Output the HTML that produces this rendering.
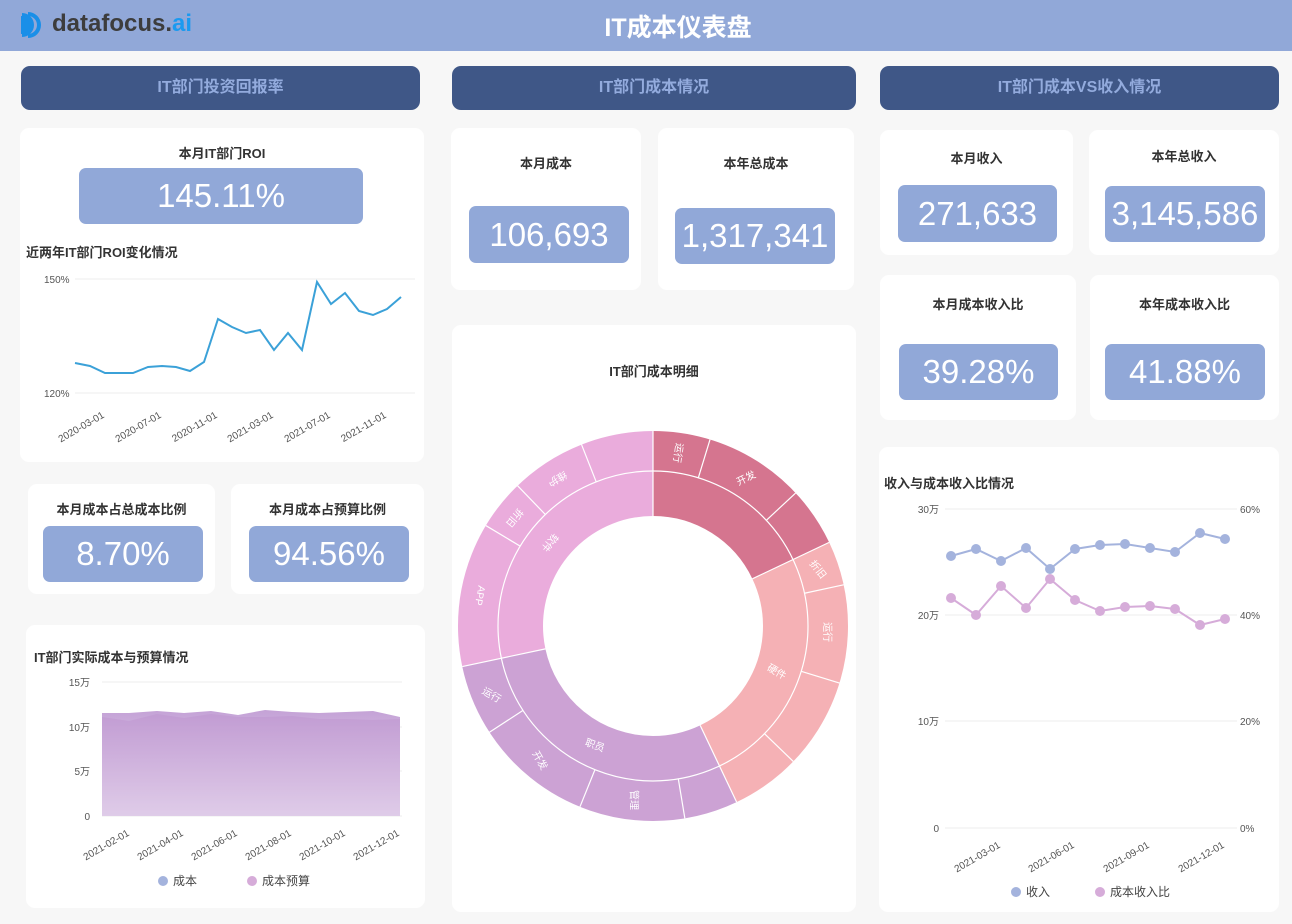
<!DOCTYPE html>
<html><head><meta charset="utf-8"><style>
*{margin:0;padding:0;box-sizing:border-box}
body{width:1292px;height:924px;background:#f7f7f7;font-family:"Liberation Sans","Noto Sans CJK SC",sans-serif;position:relative;overflow:hidden}
.a{position:absolute}
.hdr{left:0;top:0;width:1292px;height:51px;background:#91a8d8}
.sec{background:#3f5787;border-radius:9px;color:#93abdd;font-weight:bold;font-size:16px;text-align:center;line-height:44px;height:44px}
.card{background:#fff;border-radius:9px}
.t{font-size:13px;font-weight:bold;color:#333;text-align:center;position:absolute;width:100%}
.box{background:#91a8d8;border-radius:7px;color:#fff;font-size:33px;text-align:center;position:absolute}
.ax{font-size:10px;fill:#555;font-family:"Liberation Sans",sans-serif}
</style></head><body>
<div class="a hdr"></div>
<svg class="a" style="left:20px;top:10px" width="30" height="30" viewBox="0 0 30 30"><path d="M2 3 A12 12 0 0 1 2 27 Z" fill="#1a8fe8" transform="translate(0,0)"/><path d="M8 2 A13 13 0 0 1 8 28 L8 24 A9 9 0 0 0 8 6 Z" fill="#1a8fe8"/><path d="M1 6 A8 9 0 0 1 1 24 Z" fill="#1a8fe8"/></svg>
<div class="a" style="left:52px;top:10px;font-size:24px;font-weight:bold;color:#3d3d3d;letter-spacing:0px">datafocus.<span style="color:#1a9af0">ai</span></div>
<div class="a" style="left:0;width:1356px;top:8px;text-align:center;color:#fff;font-size:25px;font-weight:bold">IT成本仪表盘</div>

<div class="a sec" style="left:21px;top:66px;width:399px">IT部门投资回报率</div>
<div class="a sec" style="left:452px;top:66px;width:404px">IT部门成本情况</div>
<div class="a sec" style="left:880px;top:66px;width:399px">IT部门成本VS收入情况</div>

<!-- col1 -->
<div class="a card" style="left:20px;top:128px;width:404px;height:334px">
<div class="t" style="top:15px">本月IT部门ROI</div>
<div class="box" style="left:59px;top:40px;width:284px;height:56px;line-height:56px">145.11%</div>
<div class="a" style="left:6px;top:114px;font-size:13px;font-weight:bold;color:#333">近两年IT部门ROI变化情况</div>
</div>
<svg class="a" style="left:20px;top:260px" width="404" height="200">
<line x1="55" y1="19" x2="395" y2="19" stroke="#eee"/><line x1="55" y1="133" x2="395" y2="133" stroke="#eee"/>
<text class="ax" x="24" y="23">150%</text><text class="ax" x="24" y="137">120%</text>
<polyline fill="none" stroke="#3ba1d8" stroke-width="2" points="55,103 70,106 85,113 100,113 113,113 128,107 142,106 156,107 170,111 184,102 198,59 212,67 226,73 240,70 254,90 268,73 282,90 297,22 311,44 325,33 339,51 353,55 367,49 381,37"/>
<g class="ax" text-anchor="end"><text transform="translate(85,157) rotate(-30)">2020-03-01</text><text transform="translate(142,157) rotate(-30)">2020-07-01</text><text transform="translate(198,157) rotate(-30)">2020-11-01</text><text transform="translate(254,157) rotate(-30)">2021-03-01</text><text transform="translate(311,157) rotate(-30)">2021-07-01</text><text transform="translate(367,157) rotate(-30)">2021-11-01</text></g>
</svg>

<div class="a card" style="left:28px;top:484px;width:187px;height:110px"><div class="t" style="top:15px">本月成本占总成本比例</div><div class="box" style="left:15px;top:42px;width:160px;height:56px;line-height:56px">8.70%</div></div>
<div class="a card" style="left:231px;top:484px;width:193px;height:110px"><div class="t" style="top:15px">本月成本占预算比例</div><div class="box" style="left:18px;top:42px;width:160px;height:56px;line-height:56px">94.56%</div></div>

<div class="a card" style="left:26px;top:625px;width:399px;height:283px"><div class="a" style="left:8px;top:22px;font-size:13px;font-weight:bold;color:#333">IT部门实际成本与预算情况</div></div>
<svg class="a" style="left:26px;top:625px" width="399" height="283">
<defs><linearGradient id="g" x1="0" y1="0" x2="0" y2="1"><stop offset="0" stop-color="#c4a2d6"/><stop offset="1" stop-color="#f3eef8"/></linearGradient></defs>
<g stroke="#eee"><line x1="76" y1="57" x2="376" y2="57"/><line x1="76" y1="102" x2="376" y2="102"/><line x1="76" y1="146" x2="376" y2="146"/><line x1="76" y1="191" x2="376" y2="191"/></g>
<g class="ax" text-anchor="end"><text x="64" y="61">15万</text><text x="64" y="106">10万</text><text x="64" y="150">5万</text><text x="64" y="195">0</text></g>
<polygon fill="url(#g)" points="76,88 103,88 131,86 158,88 185,86 212,90 239,85 266,87 293,88 320,87 347,86 374,92 374,191 76,191"/>
<polygon fill="#b98ccc" opacity=".35" points="76,92 103,96 131,89 158,93 185,89 212,92 239,92 266,91 293,94 320,94 347,95 374,94 374,191 76,191"/>
<g class="ax" text-anchor="end"><text transform="translate(104,210) rotate(-30)">2021-02-01</text><text transform="translate(158,210) rotate(-30)">2021-04-01</text><text transform="translate(212,210) rotate(-30)">2021-06-01</text><text transform="translate(266,210) rotate(-30)">2021-08-01</text><text transform="translate(320,210) rotate(-30)">2021-10-01</text><text transform="translate(374,210) rotate(-30)">2021-12-01</text></g>
<circle cx="137" cy="256" r="5" fill="#a4b3dd"/><text x="147" y="260" font-size="12" fill="#444">成本</text>
<circle cx="226" cy="256" r="5" fill="#d6acd9"/><text x="236" y="260" font-size="12" fill="#444">成本预算</text>
</svg>

<!-- col2 -->
<div class="a card" style="left:451px;top:128px;width:190px;height:162px"><div class="t" style="top:25px">本月成本</div><div class="box" style="left:18px;top:78px;width:160px;height:57px;line-height:57px">106,693</div></div>
<div class="a card" style="left:658px;top:128px;width:196px;height:162px"><div class="t" style="top:25px">本年总成本</div><div class="box" style="left:17px;top:80px;width:160px;height:56px;line-height:56px">1,317,341</div></div>
<div class="a card" style="left:452px;top:325px;width:404px;height:587px"><div class="t" style="top:36px">IT部门成本明细</div></div>
<svg class="a" style="left:453px;top:426px" width="400" height="400" viewBox="-200 -200 400 400">
<g transform="rotate(-90)" fill="none">
<circle r="132.5" stroke-width="45" stroke="#d5758f" pathLength="360" stroke-dasharray="64.6 400"/>
<circle r="132.5" stroke-width="45" stroke="#f5b1b5" pathLength="360" stroke-dasharray="0 64.6 90 400"/>
<circle r="132.5" stroke-width="45" stroke="#cca2d4" pathLength="360" stroke-dasharray="0 154.6 103.4 400"/>
<circle r="132.5" stroke-width="45" stroke="#eaacdc" pathLength="360" stroke-dasharray="0 258 102 400"/>
<circle r="175" stroke-width="40" stroke="#d5758f" pathLength="360" stroke-dasharray="64.6 400"/>
<circle r="175" stroke-width="40" stroke="#f5b1b5" pathLength="360" stroke-dasharray="0 64.6 90 400"/>
<circle r="175" stroke-width="40" stroke="#cca2d4" pathLength="360" stroke-dasharray="0 154.6 103.4 400"/>
<circle r="175" stroke-width="40" stroke="#eaacdc" pathLength="360" stroke-dasharray="0 258 102 400"/>
<circle r="155" stroke="#fff" stroke-width="1.2"/>
</g>
<g stroke="#fff" stroke-width="1.2">
<line y1="-110" y2="-195"/><line y1="-110" y2="-195" transform="rotate(64.6)"/><line y1="-110" y2="-195" transform="rotate(154.6)"/><line y1="-110" y2="-195" transform="rotate(258)"/>
<g><line y1="-155" y2="-195" transform="rotate(17)"/><line y1="-155" y2="-195" transform="rotate(47)"/><line y1="-155" y2="-195" transform="rotate(77.8)"/><line y1="-155" y2="-195" transform="rotate(107)"/><line y1="-155" y2="-195" transform="rotate(134)"/><line y1="-155" y2="-195" transform="rotate(170.6)"/><line y1="-155" y2="-195" transform="rotate(202)"/><line y1="-155" y2="-195" transform="rotate(237)"/><line y1="-155" y2="-195" transform="rotate(301)"/><line y1="-155" y2="-195" transform="rotate(316)"/><line y1="-155" y2="-195" transform="rotate(338.5)"/></g>
</g>
<g fill="#fff" font-size="10" text-anchor="middle">
<text transform="rotate(8.5) translate(0,-175) rotate(90)" dy="4">运行</text>
<text transform="rotate(32) translate(0,-175) rotate(-58)" dy="4">开发</text>
<text transform="rotate(71) translate(0,-175) rotate(-19)" dy="4">折旧</text>
<text transform="rotate(92) translate(0,-175) rotate(-2)" dy="4">运行</text>
<text transform="rotate(110) translate(0,-132) rotate(-110) rotate(30)" dy="4">硬件</text>
<text transform="rotate(186) translate(0,-175) rotate(-96)" dy="4">管理</text>
<text transform="rotate(220) translate(0,-175) rotate(-130) rotate(-30)" dy="4">开发</text>
<text transform="rotate(247) translate(0,-175) rotate(-157) rotate(-60)" dy="4">运行</text>
<text transform="rotate(206) translate(0,-132) rotate(-116) rotate(-70)" dy="4">职员</text>
<text transform="rotate(280) translate(0,-175) rotate(-190) rotate(10)" dy="4">APP</text>
<text transform="rotate(308) translate(0,-175) rotate(-218) rotate(40)" dy="4">折旧</text>
<text transform="rotate(327) translate(0,-175) rotate(-237) rotate(60)" dy="4">维护</text>
<text transform="rotate(309) translate(0,-132) rotate(-219) rotate(40)" dy="4">软件</text>
</g>
</svg>

<!-- col3 -->
<div class="a card" style="left:880px;top:130px;width:193px;height:125px"><div class="t" style="top:18px">本月收入</div><div class="box" style="left:18px;top:55px;width:159px;height:57px;line-height:57px">271,633</div></div>
<div class="a card" style="left:1089px;top:130px;width:190px;height:125px"><div class="t" style="top:16px">本年总收入</div><div class="box" style="left:16px;top:56px;width:160px;height:56px;line-height:56px">3,145,586</div></div>
<div class="a card" style="left:880px;top:275px;width:196px;height:145px"><div class="t" style="top:19px">本月成本收入比</div><div class="box" style="left:19px;top:69px;width:159px;height:56px;line-height:56px">39.28%</div></div>
<div class="a card" style="left:1090px;top:275px;width:189px;height:145px"><div class="t" style="top:19px">本年成本收入比</div><div class="box" style="left:15px;top:69px;width:160px;height:56px;line-height:56px">41.88%</div></div>
<div class="a card" style="left:879px;top:447px;width:400px;height:465px"><div class="a" style="left:5px;top:26px;font-size:13px;font-weight:bold;color:#333">收入与成本收入比情况</div></div>
<svg class="a" style="left:879px;top:447px" width="400" height="465">
<g stroke="#eee"><line x1="66" y1="62" x2="358" y2="62"/><line x1="66" y1="168" x2="358" y2="168"/><line x1="66" y1="274" x2="358" y2="274"/><line x1="66" y1="381" x2="358" y2="381"/></g>
<g class="ax" text-anchor="end"><text x="60" y="66">30万</text><text x="60" y="172">20万</text><text x="60" y="278">10万</text><text x="60" y="385">0</text></g>
<g class="ax"><text x="361" y="66">60%</text><text x="361" y="172">40%</text><text x="361" y="278">20%</text><text x="361" y="385">0%</text></g>
<polyline fill="none" stroke="#a4b3dd" stroke-width="2" points="72,109 97,102 122,114 147,101 171,122 196,102 221,98 246,97 271,101 296,105 321,86 346,92"/>
<g fill="#a4b3dd"><circle cx="72" cy="109" r="5"/><circle cx="97" cy="102" r="5"/><circle cx="122" cy="114" r="5"/><circle cx="147" cy="101" r="5"/><circle cx="171" cy="122" r="5"/><circle cx="196" cy="102" r="5"/><circle cx="221" cy="98" r="5"/><circle cx="246" cy="97" r="5"/><circle cx="271" cy="101" r="5"/><circle cx="296" cy="105" r="5"/><circle cx="321" cy="86" r="5"/><circle cx="346" cy="92" r="5"/></g>
<polyline fill="none" stroke="#d6acd9" stroke-width="2" points="72,151 97,168 122,139 147,161 171,132 196,153 221,164 246,160 271,159 296,162 321,178 346,172"/>
<g fill="#d6acd9"><circle cx="72" cy="151" r="5"/><circle cx="97" cy="168" r="5"/><circle cx="122" cy="139" r="5"/><circle cx="147" cy="161" r="5"/><circle cx="171" cy="132" r="5"/><circle cx="196" cy="153" r="5"/><circle cx="221" cy="164" r="5"/><circle cx="246" cy="160" r="5"/><circle cx="271" cy="159" r="5"/><circle cx="296" cy="162" r="5"/><circle cx="321" cy="178" r="5"/><circle cx="346" cy="172" r="5"/></g>
<g class="ax" text-anchor="end"><text transform="translate(122,400) rotate(-30)">2021-03-01</text><text transform="translate(196,400) rotate(-30)">2021-06-01</text><text transform="translate(271,400) rotate(-30)">2021-09-01</text><text transform="translate(346,400) rotate(-30)">2021-12-01</text></g>
<circle cx="137" cy="445" r="5" fill="#a4b3dd"/><text x="147" y="449" font-size="12" fill="#444">收入</text>
<circle cx="221" cy="445" r="5" fill="#d6acd9"/><text x="231" y="449" font-size="12" fill="#444">成本收入比</text>
</svg>
</body></html>
